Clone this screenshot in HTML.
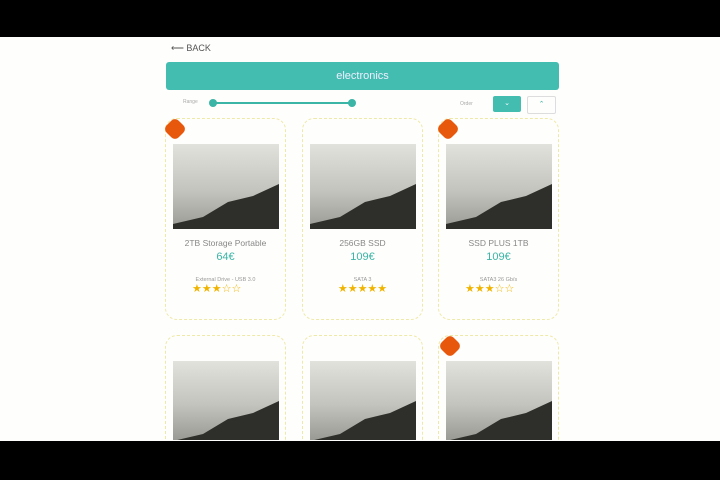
<!DOCTYPE html><html style="overflow:hidden;height:480px"><head><style>
html,body{margin:0;width:720px;height:480px;overflow:hidden}
body{background:#fefefc;font-family:"Liberation Sans",sans-serif;position:relative}
.bar{position:absolute;left:0;width:720px;background:#000;z-index:5}
.card{position:absolute;width:119px;height:200px;border:1px dashed #efe9a8;border-radius:12px;background:#fefefc}
.r2{height:104px;border-bottom:none;border-bottom-left-radius:0;border-bottom-right-radius:0}
.img{position:absolute;left:7px;top:25px;width:106px;height:85px;background:linear-gradient(#e2e2dc,#c4c4be 55%,#9a9a94);overflow:hidden}
.r2 .img{height:79px}
.img svg{position:absolute;left:0;top:0}
.t{position:absolute;left:0;width:100%;text-align:center;top:119px;font-size:8.5px;color:#888}
.p{position:absolute;left:0;width:100%;text-align:center;top:132px;font-size:11px;color:#3bb5a6}
.d{position:absolute;left:0;width:100%;text-align:center;top:158px;font-size:5.5px;color:#999}
.s{position:absolute;left:0;width:100%;text-align:center;top:163px;font-size:11px;color:#f0b400}
.badge{position:absolute;width:20px;height:20px;border-radius:6px;background:#e8580c;transform:rotate(45deg) scale(.85);}
</style></head><body>
<div class="bar" style="top:0;height:37px"></div>
<div style="position:absolute;left:171px;top:43px;font-size:9px;color:#555">⟵ BACK</div>
<div style="position:absolute;left:166px;top:62px;width:393px;height:28px;background:#44bdb1;border-radius:3px;color:#eef;font-size:11px;text-align:center;line-height:28px">electronics</div>
<div style="position:absolute;left:183px;top:99px;font-size:5px;color:#aaa">Range</div>
<div style="position:absolute;left:213px;top:102px;width:139px;height:2px;background:#3bb5a6"></div>
<div style="position:absolute;left:209px;top:99px;width:8px;height:8px;border-radius:50%;background:#3bb5a6"></div>
<div style="position:absolute;left:348px;top:99px;width:8px;height:8px;border-radius:50%;background:#3bb5a6"></div>
<div style="position:absolute;left:460px;top:101px;font-size:5px;color:#aaa">Order</div>
<div style="position:absolute;left:493px;top:96px;width:28px;height:16px;background:#44bdb1;border-radius:2px;color:#fff;font-size:7px;text-align:center;line-height:16px">⌄</div>
<div style="position:absolute;left:527px;top:96px;width:27px;height:16px;border:1px solid #ddd;border-radius:2px;color:#3bb5a6;font-size:7px;text-align:center;line-height:16px">⌃</div>

<div class="card" style="left:165px;top:118px"><div class="img"><svg width="106" height="85"><path d="M0 85L0 80 30 73 55 58 80 52 106 40 106 85Z" fill="#2e2e2a"/></svg></div><div class="t">2TB Storage Portable</div><div class="p">64€</div><div class="d">External Drive - USB 3.0</div><div class="s" style="text-align:left;left:26px">★★★☆☆</div></div>
<div class="card" style="left:302px;top:118px"><div class="img"><svg width="106" height="85"><path d="M0 85L0 80 30 73 55 58 80 52 106 40 106 85Z" fill="#2e2e2a"/></svg></div><div class="t">256GB SSD</div><div class="p">109€</div><div class="d">SATA 3</div><div class="s">★★★★★</div></div>
<div class="card" style="left:438px;top:118px"><div class="img"><svg width="106" height="85"><path d="M0 85L0 80 30 73 55 58 80 52 106 40 106 85Z" fill="#2e2e2a"/></svg></div><div class="t">SSD PLUS 1TB</div><div class="p">109€</div><div class="d">SATA3 26 Gb/s</div><div class="s" style="text-align:left;left:26px">★★★☆☆</div></div>
<div class="badge" style="left:165px;top:119px"></div>
<div class="badge" style="left:438px;top:119px"></div>
<div class="card r2" style="left:165px;top:335px"><div class="img"><svg width="106" height="85"><path d="M0 85L0 80 30 73 55 58 80 52 106 40 106 85Z" fill="#2e2e2a"/></svg></div></div>
<div class="card r2" style="left:302px;top:335px"><div class="img"><svg width="106" height="85"><path d="M0 85L0 80 30 73 55 58 80 52 106 40 106 85Z" fill="#2e2e2a"/></svg></div></div>
<div class="card r2" style="left:438px;top:335px"><div class="img"><svg width="106" height="85"><path d="M0 85L0 80 30 73 55 58 80 52 106 40 106 85Z" fill="#2e2e2a"/></svg></div></div>
<div class="badge" style="left:440px;top:336px"></div>
<div class="bar" style="top:441px;height:39px"></div>
</body></html>
